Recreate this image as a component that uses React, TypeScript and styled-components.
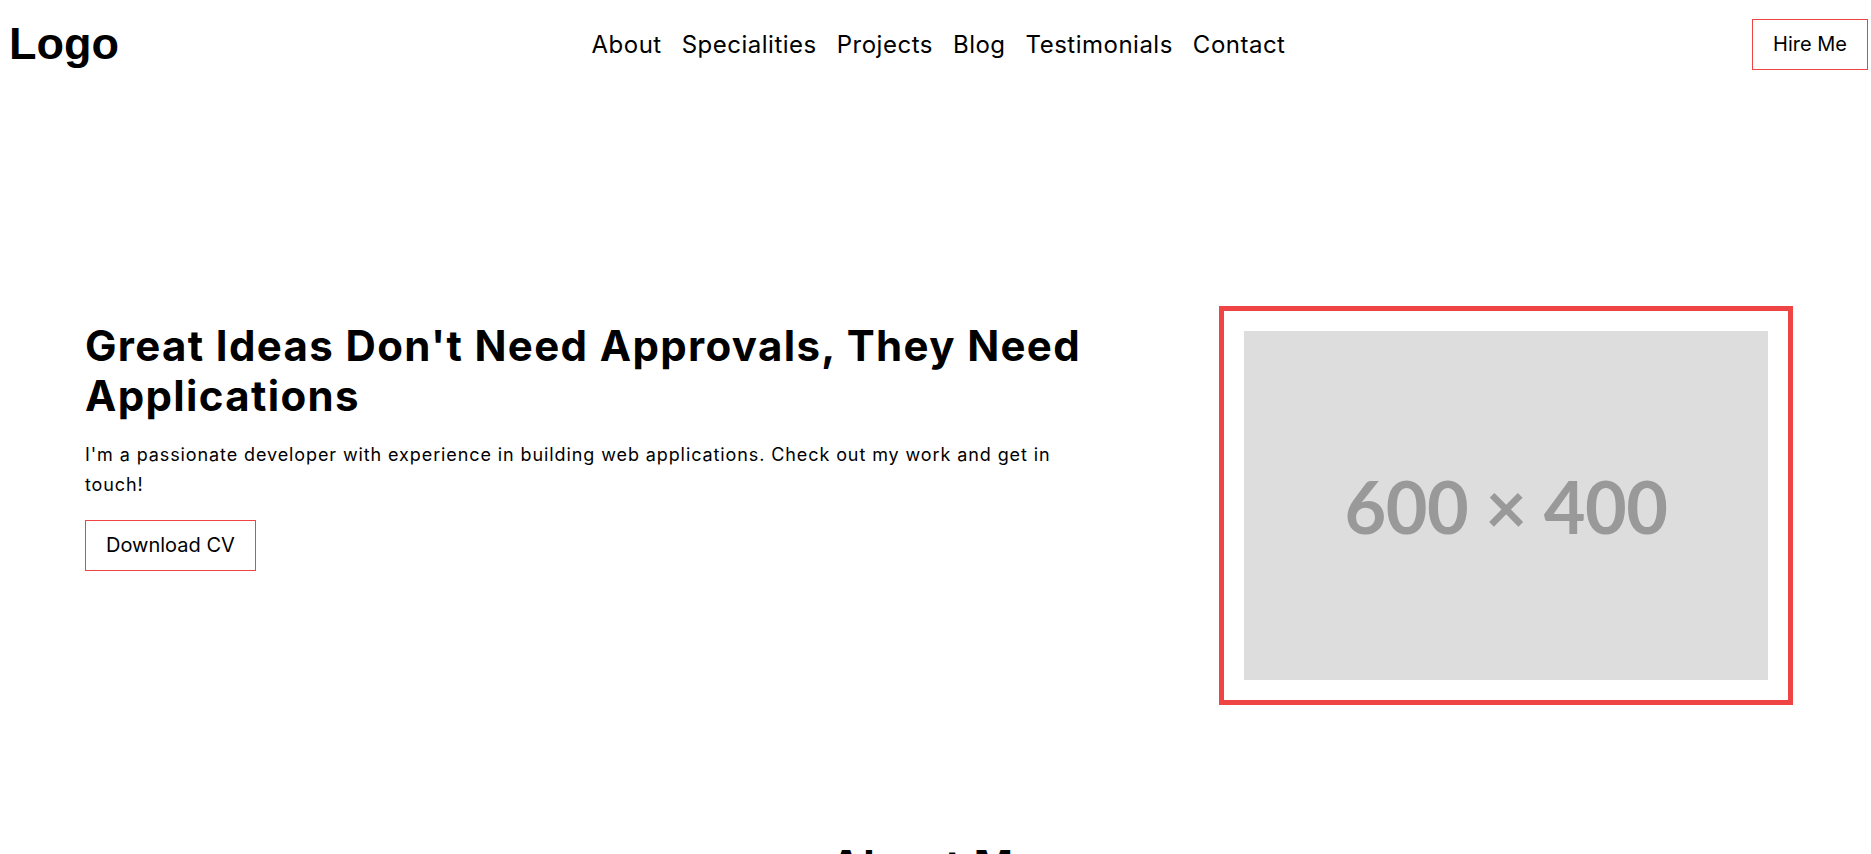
import React from "react";
import styled, { createGlobalStyle } from "styled-components";

const GlobalStyle = createGlobalStyle`
  * { box-sizing: border-box; }
  html, body { margin: 0; padding: 0; background: #ffffff; }
  body {
    font-family: Inter, "Noto Sans", Arial, sans-serif;
    color: #000000;
    overflow-x: hidden;
  }
`;

const Page = styled.div`
  width: 100%;
  min-height: 100vh;
  background: #ffffff;
`;

const Header = styled.header`
  display: grid;
  grid-template-columns: 1fr auto 1fr;
  align-items: center;
  padding: 18px 3px 18px 9px;
`;

const Logo = styled.a`
  justify-self: start;
  font-family: "Liberation Sans", Arial, sans-serif;
  font-weight: 700;
  font-size: 45px;
  line-height: normal;
  color: #000000;
  text-decoration: none;
`;

const NavList = styled.ul`
  display: flex;
  gap: 20px;
  list-style: none;
  margin: 0;
  padding: 0;
`;

const NavLink = styled.a`
  font-size: 24px;
  font-weight: 400;
  letter-spacing: 0.5px;
  color: #000000;
  text-decoration: none;
`;

const OutlineButton = styled.a<{ $align?: string }>`
  display: inline-block;
  justify-self: ${(p) => p.$align || "auto"};
  align-self: ${(p) => (p.$align ? "center" : "flex-start")};
  border: 1px solid #ef4444;
  padding: 12px 20px;
  font-size: 20px;
  line-height: 25px;
  font-weight: 400;
  color: #000000;
  background: #ffffff;
  text-decoration: none;
  cursor: pointer;
`;

const Hero = styled.section`
  display: flex;
  align-items: flex-start;
  gap: 120px;
  padding: 218px 78px 56px 85px;
`;

const HeroText = styled.div`
  flex: 1;
  display: flex;
  flex-direction: column;
  padding-top: 15px;
`;

const HeroTitle = styled.h1`
  margin: 0;
  font-size: 42px;
  font-weight: 700;
  line-height: 1.18;
  letter-spacing: 1.35px;
  color: #000000;
`;

const HeroLead = styled.p`
  margin: 20px 0;
  font-size: 18px;
  line-height: 30px;
  letter-spacing: 0.9px;
  color: #000000;
`;

const ImageFrame = styled.div`
  flex: 0 0 574px;
  border: 5px solid #ef4444;
  padding: 20px;
  background: #ffffff;
`;

const Placeholder = styled.div`
  width: 524px;
  height: 349px;
  background: #dddddd;
  display: flex;
  align-items: center;
  justify-content: center;
  font-family: Lato, "Open Sans", sans-serif;
  font-weight: 700;
  font-size: 72px;
  color: #999999;
  letter-spacing: -0.5px;
`;

const About = styled.section`
  padding: 80px 85px 80px;
  display: flex;
  flex-direction: column;
  align-items: center;
`;

const SectionTitle = styled.h2`
  margin: 0;
  font-size: 42px;
  font-weight: 700;
  line-height: 1.2;
  letter-spacing: 1.35px;
  color: #000000;
`;

const SectionText = styled.p`
  max-width: 900px;
  text-align: center;
  font-size: 18px;
  line-height: 30px;
  letter-spacing: 0.9px;
`;

const navItems = ["About", "Specialities", "Projects", "Blog", "Testimonials", "Contact"];

export default function App() {
  return (
    <Page>
      <GlobalStyle />
      <Header>
        <Logo href="#">Logo</Logo>
        <nav>
          <NavList>
            {navItems.map((item) => (
              <li key={item}>
                <NavLink href={`#${item.toLowerCase()}`}>{item}</NavLink>
              </li>
            ))}
          </NavList>
        </nav>
        <OutlineButton $align="end" href="#contact">
          Hire Me
        </OutlineButton>
      </Header>
      <Hero>
        <HeroText>
          <HeroTitle>Great Ideas Don't Need Approvals, They Need Applications</HeroTitle>
          <HeroLead>
            I'm a passionate developer with experience in building web applications. Check out my work and get in touch!
          </HeroLead>
          <OutlineButton href="#">Download CV</OutlineButton>
        </HeroText>
        <ImageFrame>
          <Placeholder>600 × 400</Placeholder>
        </ImageFrame>
      </Hero>
      <About id="about">
        <SectionTitle>About Me</SectionTitle>
        <SectionText>
          I build fast, accessible web applications with a focus on clean code and great user experiences.
        </SectionText>
      </About>
    </Page>
  );
}
